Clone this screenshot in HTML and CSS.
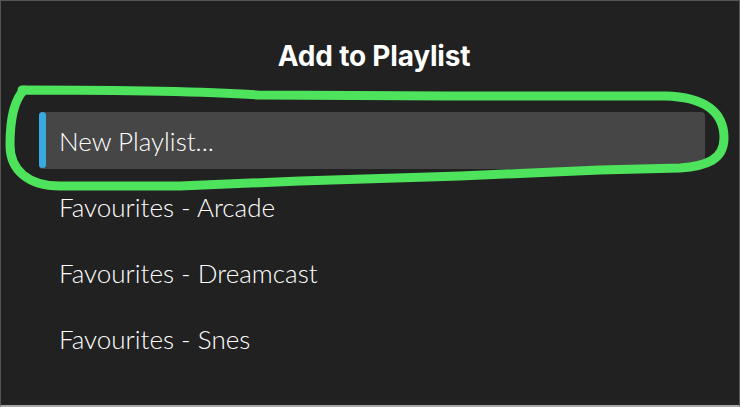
FILE: index.html
```html
<!DOCTYPE html>
<html lang="en">
<head>
<meta charset="utf-8">
<title>Add to Playlist</title>
<link rel="stylesheet" href="styles.css">
</head>
<body>
<div class="dialog">
  <h1 class="title">Add to Playlist</h1>
  <ul class="list">
    <li class="item item--selected"><span class="item__bar"></span><span class="item__label">New Playlist...</span></li>
    <li class="item"><span class="item__label">Favourites - Arcade</span></li>
    <li class="item"><span class="item__label">Favourites - Dreamcast</span></li>
    <li class="item"><span class="item__label">Favourites - Snes</span></li>
  </ul>
  <svg class="scribble" width="740" height="407" viewBox="0 0 740 407" aria-hidden="true">
    <path d="M 22 90 C 90 90, 200 91, 258 95 L 450 96 L 665 96 C 705 97, 724 112, 724 138 C 724 160, 706 166, 680 168 L 600 170 L 460 176 L 300 181 L 180 186 L 60 186 C 28 186, 10 170, 10 145 C 10 118, 14 100, 24 90" fill="none" stroke="#4de35c" stroke-width="9" stroke-linecap="round" stroke-linejoin="round"/>
  </svg>
</div>
</body>
</html>
```
FILE: styles.css
```css
* { box-sizing: border-box; }
html, body { margin: 0; padding: 0; }
body {
  width: 740px;
  height: 407px;
  background: #212121;
  font-family: "Lato", "Liberation Sans", sans-serif;
  overflow: hidden;
}
.dialog {
  position: relative;
  width: 740px;
  height: 407px;
  border: 1px solid #555;
  border-bottom: 2px solid #a8a8a8;
  padding: 0 34px 0 38px;
  display: flex;
  flex-direction: column;
}
.title {
  margin: 36px 0 0 0;
  height: 38px;
  line-height: 38px;
  text-align: center;
  color: #ffffff;
  font-family: "Inter", "Liberation Sans", sans-serif;
  font-size: 28px;
  font-weight: 700;
  letter-spacing: -0.2px;
  padding-left: 4px;
}
.list {
  list-style: none;
  margin: 37px 0 0 0;
  padding: 0;
  display: flex;
  flex-direction: column;
  gap: 9px;
}
.item {
  position: relative;
  height: 57px;
  display: flex;
  align-items: center;
  padding-left: 20px;
  border-radius: 4px;
  color: #ffffff;
  font-size: 26px;
  font-weight: 300;
}
.item--selected { background: #464646; }
.item__bar {
  position: absolute;
  left: 0;
  top: 0;
  bottom: 1px;
  width: 7px;
  border-radius: 4px;
  background: #38aae2;
}
.item__label { line-height: 1; }
.scribble {
  position: absolute;
  left: -1px;
  top: -1px;
  pointer-events: none;
}
```
